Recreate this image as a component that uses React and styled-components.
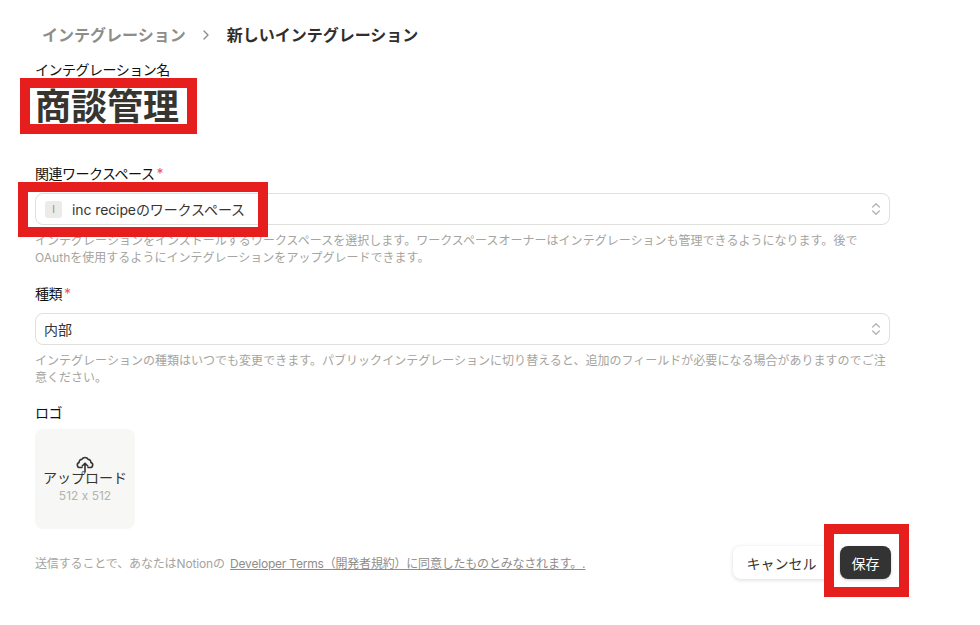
import React from 'react';
import styled, { createGlobalStyle } from 'styled-components';
import { ChevronRight, ChevronsUpDown } from 'lucide-react';

const GlobalStyle = createGlobalStyle`
    html, body {
        margin: 0;
        padding: 0;
        background: #fff;
    }
    * {
        box-sizing: border-box;
    }
    body {
        font-family: Inter, "Noto Sans CJK JP", sans-serif;
        font-feature-settings: "calt" 0;
        color: #111;
    }
`

const Page = styled.div`
    position: relative;
    width: 980px;
    height: 625px;
    overflow: hidden;
    padding: 23px 90px 0 35px;
`

const Breadcrumb = styled.div`
    display: flex;
    align-items: center;
    height: 24px;
    padding-left: 7px;
    font-size: 16px;
    font-weight: 700;
    line-height: 24px;
`

const Crumb = styled.span`
    color: ${props => props.$current ? '#2f2e2c' : '#8f8d89'};
`

const CrumbSep = styled.span`
    display: flex;
    width: 41px;
    justify-content: center;
    color: #8f8d89;
`

const Field = styled.div`
    margin-top: ${props => props.$top || 0}px;
`

const Label = styled.div`
    font-size: 14px;
    line-height: 20px;
    letter-spacing: -0.5px;
    color: #111;
`

const Star = styled.span`
    color: #eb5757;
    margin-left: 2px;
`

const Title = styled.div`
    height: 36px;
    margin-top: 9px;
    font-size: 36px;
    font-weight: 700;
    line-height: 36px;
    color: #37352f;
`

const SelectBox = styled.div`
    display: flex;
    align-items: center;
    height: 32px;
    margin-top: 9px;
    padding: 0 5px 0 8px;
    border: 1px solid #dfdfdd;
    border-radius: 8px;
    font-size: 14px;
    letter-spacing: -0.1px;
    color: #37352f;
`

const SelectText = styled.span`
    flex: 1;
`

const Badge = styled.span`
    display: flex;
    align-items: center;
    justify-content: center;
    width: 17px;
    height: 17px;
    margin: 0 10px 0 1px;
    border-radius: 3px;
    background: #ebebea;
    color: #8f8d89;
    font-size: 10px;
`

const Help = styled.div`
    margin-top: 7px;
    font-size: 12px;
    line-height: 17px;
    letter-spacing: 0.02px;
    color: #a5a4a0;
`

const UploadBox = styled.div`
    display: flex;
    flex-direction: column;
    align-items: center;
    justify-content: center;
    width: 100px;
    height: 100px;
    margin-top: 6px;
    border-radius: 8px;
    background: #f7f7f5;
`

const UploadIcon = styled.svg`
    display: block;
    position: relative;
    z-index: 1;
    margin-bottom: -5px;
`

const UploadLabel = styled.div`
    font-size: 14px;
    line-height: 20px;
    color: #37352f;
`

const UploadSize = styled.div`
    font-size: 12px;
    line-height: 16px;
    color: #b4b3af;
`

const Footer = styled.div`
    display: flex;
    align-items: center;
    justify-content: space-between;
    margin-top: 17px;
`

const Terms = styled.div`
    font-size: 12px;
    letter-spacing: -0.14px;
    color: #a5a4a0;
`

const TermsLink = styled.span`
    margin-left: 2px;
    letter-spacing: -0.2px;
    color: #8f8d89;
    text-decoration: underline;
`

const Actions = styled.div`
    display: flex;
    margin-right: -1px;
`

const Button = styled.button`
    height: 33px;
    border: none;
    border-radius: 8px;
    font-family: inherit;
    font-size: 14px;
    padding: 0;
    background: ${props => props.$primary ? '#333' : '#fff'};
    color: ${props => props.$primary ? '#fff' : '#37352f'};
    box-shadow: ${props => props.$primary ? '0 1px 3px rgba(0,0,0,.2)' : '0 1px 4px rgba(0,0,0,.15)'};
    width: ${props => props.$primary ? 51 : 97}px;
    margin-left: ${props => props.$primary ? 10 : 0}px;
`

const RedBox = styled.div`
    position: absolute;
    border: 10px solid #e61e1e;
    left: ${props => props.$x}px;
    top: ${props => props.$y}px;
    width: ${props => props.$w}px;
    height: ${props => props.$h}px;
`

export default function App() {
    return (
        <Page>
            <GlobalStyle />
            <Breadcrumb>
                <Crumb>インテグレーション</Crumb>
                <CrumbSep><ChevronRight size={16} /></CrumbSep>
                <Crumb $current>新しいインテグレーション</Crumb>
            </Breadcrumb>
            <Field $top={13}>
                <Label>インテグレーション名</Label>
                <Title>商談管理</Title>
            </Field>
            <Field $top={39}>
                <Label>関連ワークスペース<Star>*</Star></Label>
                <SelectBox>
                    <Badge>I</Badge>
                    <SelectText>inc recipeのワークスペース</SelectText>
                    <ChevronsUpDown size={16} color="#b4b3af" />
                </SelectBox>
                <Help>インテグレーションをインストールするワークスペースを選択します。ワークスペースオーナーはインテグレーションも管理できるようになります。後でOAuthを使用するようにインテグレーションをアップグレードできます。</Help>
            </Field>
            <Field $top={18}>
                <Label>種類<Star>*</Star></Label>
                <SelectBox>
                    <SelectText>内部</SelectText>
                    <ChevronsUpDown size={16} color="#b4b3af" />
                </SelectBox>
                <Help>インテグレーションの種類はいつでも変更できます。パブリックインテグレーションに切り替えると、追加のフィールドが必要になる場合がありますのでご注意ください。</Help>
            </Field>
            <Field $top={17}>
                <Label>ロゴ</Label>
                <UploadBox>
                    <UploadIcon width="18" height="18" viewBox="0 0 18 18" fill="none" stroke="#37352f" strokeWidth="1.6" strokeLinecap="round" strokeLinejoin="round">
                        <path d="M6 12.5H4a2.6 2.6 0 0 1-.8-5.1 2.6 2.6 0 0 1 2.6-3 3.6 3.6 0 0 1 6.4 0 2.6 2.6 0 0 1 2.6 3 2.6 2.6 0 0 1-.8 5.1H12" />
                        <path d="M9 17V8.5M6.2 11 9 8.2l2.8 2.8" />
                    </UploadIcon>
                    <UploadLabel>アップロード</UploadLabel>
                    <UploadSize>512 x 512</UploadSize>
                </UploadBox>
            </Field>
            <Footer>
                <Terms>送信することで、あなたはNotionの <TermsLink>Developer Terms（開発者規約）に同意したものとみなされます。.</TermsLink></Terms>
                <Actions>
                    <Button>キャンセル</Button>
                    <Button $primary>保存</Button>
                </Actions>
            </Footer>
            <RedBox $x={20} $y={78} $w={177} $h={56} />
            <RedBox $x={18} $y={182} $w={250} $h={55} />
            <RedBox $x={824} $y={524} $w={85} $h={73} />
        </Page>
    );
}
